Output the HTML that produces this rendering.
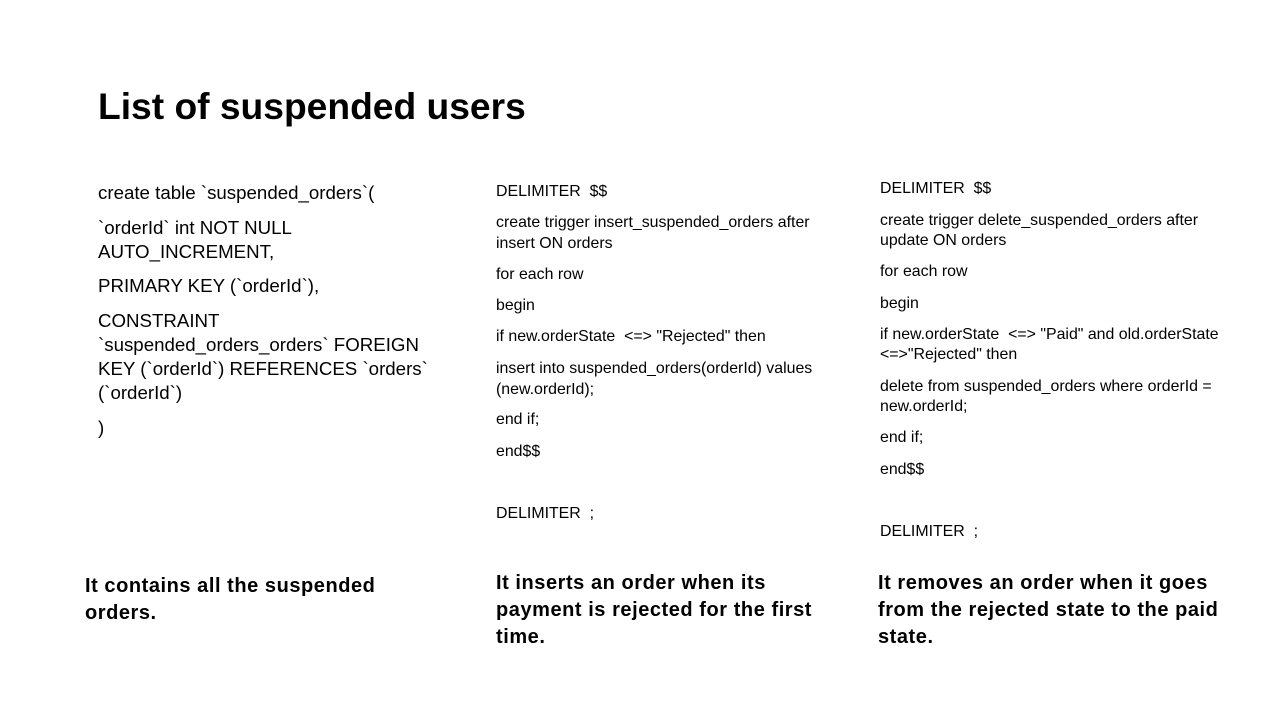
<!DOCTYPE html>
<html><head><meta charset="utf-8"><style>
body{margin:0;width:1280px;height:720px;background:#fff;position:relative;overflow:hidden;font-family:"Liberation Sans",Arial,sans-serif;color:#000}
div{position:absolute;white-space:nowrap;line-height:20px}
.t{font-size:37.2px;font-weight:bold;line-height:40px}
.a{font-size:18.7px;left:98px}
.b{font-size:15.9px;left:496px}
.c{font-size:15.9px;left:880px}
.s{font-size:20px;font-weight:bold;letter-spacing:0.55px}
</style></head><body>
<div class="t" style="left:98px;top:86px">List of suspended users</div>

<div class="a" style="top:183px">create table `suspended_orders`(</div>
<div class="a" style="top:218px">`orderId` int NOT NULL</div>
<div class="a" style="top:242px">AUTO_INCREMENT,</div>
<div class="a" style="top:276px">PRIMARY KEY (`orderId`),</div>
<div class="a" style="top:311px">CONSTRAINT</div>
<div class="a" style="top:335px">`suspended_orders_orders` FOREIGN</div>
<div class="a" style="top:359px">KEY (`orderId`) REFERENCES `orders`</div>
<div class="a" style="top:383px">(`orderId`)</div>
<div class="a" style="top:418px">)</div>

<div class="b" style="top:182px">DELIMITER &nbsp;$$</div>
<div class="b" style="top:213px">create trigger insert_suspended_orders after</div>
<div class="b" style="top:234px">insert ON orders</div>
<div class="b" style="top:265px">for each row</div>
<div class="b" style="top:296px">begin</div>
<div class="b" style="top:327px">if new.orderState &nbsp;&lt;=&gt; "Rejected" then</div>
<div class="b" style="top:359px">insert into suspended_orders(orderId) values</div>
<div class="b" style="top:380px">(new.orderId);</div>
<div class="b" style="top:410px">end if;</div>
<div class="b" style="top:442px">end$$</div>
<div class="b" style="top:504px">DELIMITER &nbsp;;</div>

<div class="c" style="top:179px">DELIMITER &nbsp;$$</div>
<div class="c" style="top:211px">create trigger delete_suspended_orders after</div>
<div class="c" style="top:231px">update ON orders</div>
<div class="c" style="top:262px">for each row</div>
<div class="c" style="top:294px">begin</div>
<div class="c" style="top:325px">if new.orderState &nbsp;&lt;=&gt; "Paid" and old.orderState</div>
<div class="c" style="top:345px">&lt;=&gt;"Rejected" then</div>
<div class="c" style="top:377px">delete from suspended_orders where orderId =</div>
<div class="c" style="top:397px">new.orderId;</div>
<div class="c" style="top:428px">end if;</div>
<div class="c" style="top:460px">end$$</div>
<div class="c" style="top:522px">DELIMITER &nbsp;;</div>

<div class="s" style="left:85px;top:573px;line-height:27px">It contains all the suspended<br>orders.</div>
<div class="s" style="left:496px;top:570px;line-height:27px">It inserts an order when its<br>payment is rejected for the first<br>time.</div>
<div class="s" style="left:878px;top:570px;line-height:27px">It removes an order when it goes<br>from the rejected state to the paid<br>state.</div>
</body></html>
